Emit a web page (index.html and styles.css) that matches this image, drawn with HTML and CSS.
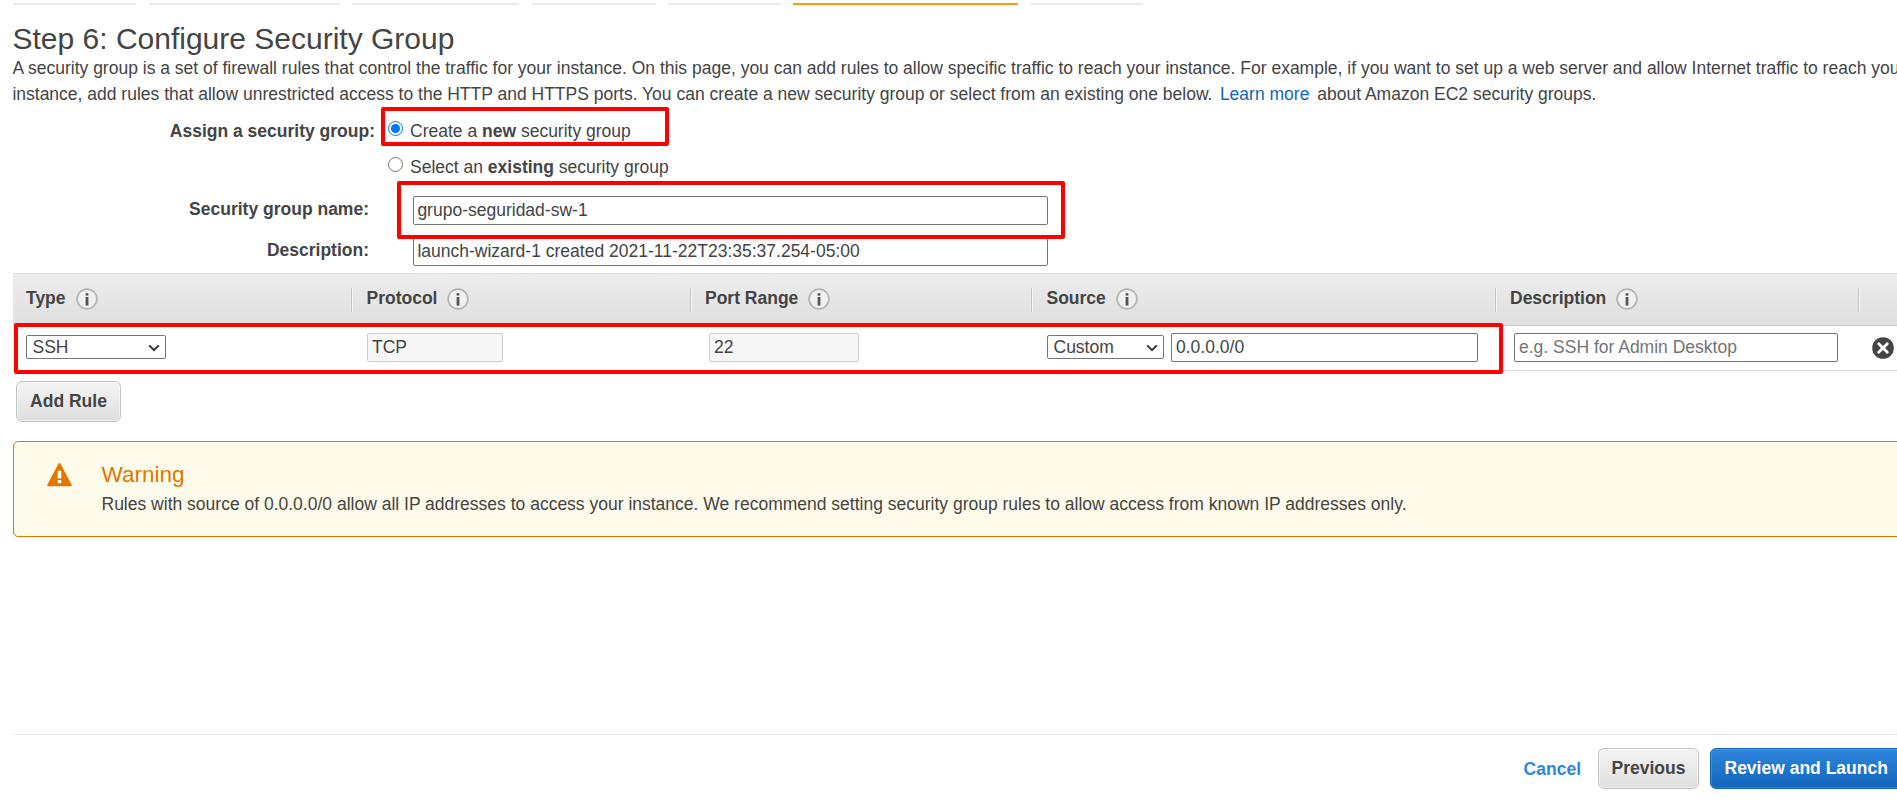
FILE: index.html
```html
<!DOCTYPE html>
<html lang="en">
<head>
<meta charset="utf-8">
<title>Step 6: Configure Security Group</title>
<link rel="stylesheet" href="styles.css">
</head>
<body>
<svg class="defs" width="0" height="0" aria-hidden="true">
  <symbol id="info" viewBox="0 0 22 22">
    <circle cx="11" cy="11" r="9.9" fill="#f1f1f1" stroke="#b4b4b4" stroke-width="1.7"/>
    <rect x="9.6" y="5.2" width="2.8" height="2.4" fill="#555"/>
    <rect x="9.6" y="9" width="2.8" height="8.6" fill="#555"/>
  </symbol>
  <symbol id="chevron" viewBox="0 0 12 8">
    <path d="M1.2 1.4 6 6.1l4.8-4.7" fill="none" stroke="#333" stroke-width="2"/>
  </symbol>
</svg>
<div class="page">
  <nav class="steps">
    <span class="step s1"></span><span class="step s2"></span><span class="step s3"></span><span class="step s4"></span><span class="step s5"></span><span class="step s6 active"></span><span class="step s7"></span>
  </nav>
  <h1 class="title">Step 6: Configure Security Group</h1>
  <p class="intro">A security group is a set of firewall rules that control the traffic for your instance. On this page, you can add rules to allow specific traffic to reach your instance. For example, if you want to set up a web server and allow Internet traffic to reach your<br>instance, add rules that allow unrestricted access to the HTTP and HTTPS ports. You can create a new security group or select from an existing one below. <a class="learn">Learn more</a> about Amazon EC2 security groups.</p>

  <form class="form">
    <div class="choice">
      <span class="label wide">Assign a security group:</span>
      <input class="radio" type="radio" name="sg" checked>
      <span>Create a <b>new</b> security group</span>
    </div>
    <div class="choice">
      <span class="label wide"></span>
      <input class="radio" type="radio" name="sg">
      <span>Select an <b>existing</b> security group</span>
    </div>
    <div class="field first">
      <span class="label">Security group name:</span>
      <input class="input long" type="text" value="grupo-seguridad-sw-1">
    </div>
    <div class="field">
      <span class="label">Description:</span>
      <input class="input long" type="text" value="launch-wizard-1 created 2021-11-22T23:35:37.254-05:00">
    </div>
  </form>

  <div class="grid head">
    <div class="th">Type<svg class="info"><use href="#info"/></svg></div>
    <div class="th">Protocol<svg class="info"><use href="#info"/></svg></div>
    <div class="th">Port Range<svg class="info"><use href="#info"/></svg></div>
    <div class="th">Source<svg class="info"><use href="#info"/></svg></div>
    <div class="th">Description<svg class="info"><use href="#info"/></svg></div>
    <div class="th"></div>
  </div>
  <div class="grid row">
    <div class="td"><span class="select type">SSH<svg class="chevron"><use href="#chevron"/></svg></span></div>
    <div class="td"><input class="input off protocol" type="text" value="TCP" readonly></div>
    <div class="td"><input class="input off port" type="text" value="22" readonly></div>
    <div class="td source"><span class="select custom">Custom<svg class="chevron"><use href="#chevron"/></svg></span><input class="input cidr" type="text" value="0.0.0.0/0"></div>
    <div class="td"><input class="input desc" type="text" placeholder="e.g. SSH for Admin Desktop"></div>
    <div class="td"><svg class="remove" viewBox="0 0 22 22"><circle cx="11" cy="11" r="10.8" fill="#444"/><path d="M6.7 6.7l8.6 8.6M15.3 6.7l-8.6 8.6" stroke="#fff" stroke-width="2.8" stroke-linecap="round"/></svg></div>
  </div>
  <button class="btn add">Add Rule</button>

  <section class="warning">
    <svg class="alert" viewBox="0 0 25 24"><path d="M12.5 1 L23.8 22.2 H1.2 Z" fill="#e07700" stroke="#e07700" stroke-width="2" stroke-linejoin="round"/><path d="M10.7 7.8h3.6v7.6h-3.6zM10.7 17h3.6v3.2h-3.6z" fill="#fffbea"/></svg>
    <div>
      <h2 class="warning-title">Warning</h2>
      <p class="warning-text">Rules with source of 0.0.0.0/0 allow all IP addresses to access your instance. We recommend setting security group rules to allow access from known IP addresses only.</p>
    </div>
  </section>

  <footer class="footer">
    <a class="cancel">Cancel</a>
    <button class="btn">Previous</button>
    <button class="btn primary">Review and Launch</button>
  </footer>

  <div class="mark mark-new"></div>
  <div class="mark mark-name"></div>
  <div class="mark mark-rule"></div>
</div>
</body>
</html>
```
FILE: styles.css
```css
* { box-sizing: border-box; }
body {
  margin: 0;
  background: #fff;
  color: #444;
  font: 17.5px/26px "Liberation Sans", Arial, sans-serif;
  overflow: hidden;
}
.defs { position: absolute; }
.page {
  position: relative;
  display: flex;
  flex-direction: column;
  align-items: stretch;
  height: 806px;
  padding-left: 13px;
  overflow: hidden;
}

.steps { display: flex; gap: 12.5px; padding-top: 3px; height: 22px; flex: none; }
.step { height: 2px; background: #ebebeb; }
.step.active { background: #ff9914; }
.s1 { width: 123px; }
.s2 { width: 191px; }
.s3 { width: 167px; }
.s4 { width: 124px; }
.s5 { width: 112.5px; }
.s6 { width: 225px; }
.s7 { width: 112px; }

.title { margin: 0 0 -1px -0.5px; font-size: 30px; line-height: 34px; font-weight: 400; }
.intro { margin: 0 0 0 -0.6px; white-space: nowrap; }
.learn { color: #1166bb; margin: 0 3px 0 2.6px; }

.form { height: 166px; padding-top: 6px; flex: none; }
.choice { display: flex; align-items: center; height: 36px; }
.label { width: 356px; text-align: right; font-weight: 700; }
.label.wide { width: 362px; }
.radio { width: 15px; height: 15px; margin: 0 7px 5px 13px; }
.field { display: flex; align-items: center; height: 41px; }
.field.first { margin-top: 5px; }
.field .label { padding-bottom: 3px; }
.input {
  height: 29px;
  padding: 0 4px;
  border: 1px solid #767676;
  border-radius: 2px;
  background: #fff;
  color: #444;
  font: inherit;
  outline: none;
}
.input::placeholder { color: #757575; opacity: 1; }
.input.off { background: #f7f7f7; border-color: #ccc; }
.long { width: 635px; margin-left: 44px; padding-left: 3.4px; }

.grid { display: grid; grid-template-columns: 340px 338.5px 341.5px 463.5px 363.5px 1fr; flex: none; }
.head {
  height: 53px;
  padding-top: 14px;
  border-top: 1px solid #ddd;
  border-bottom: 1px solid #c8c8c8;
  background: linear-gradient(#ededed, #dfdfdf);
}
.th {
  display: flex;
  height: 24px;
  padding-left: 13px;
  line-height: 20px;
  font-weight: 700;
  border-right: 1px solid #f8f8f8;
  box-shadow: inset -1px 0 #c4c4c4;
}
.th:last-child { border: 0; box-shadow: none; }
.th + .th { padding-left: 13.5px; }
.info { width: 22px; height: 22px; margin-left: 10px; }
.row { height: 45px; border-bottom: 1px solid #ddd; padding-top: 7px; }
.td { display: flex; align-items: center; height: 29px; padding-left: 14px; }
.td:first-child { padding-left: 13px; }
.td:nth-child(3) { padding-left: 17.5px; }
.td:nth-child(5) { padding-left: 17.5px; }
.td:nth-child(6) { padding-left: 12px; }
.select {
  display: flex;
  align-items: center;
  justify-content: space-between;
  height: 24px;
  margin-bottom: 1px;
  padding: 0 5px 0 5.5px;
  border: 1px solid #767676;
  border-radius: 2px;
  line-height: 22px;
}
.chevron { width: 12px; height: 8px; margin-top: 2px; }
.type { width: 140px; }
.custom { width: 117px; }
.source { gap: 7px; }
.protocol { width: 136px; }
.port { width: 150px; }
.cidr { width: 307px; }
.desc { width: 324px; }
.remove { width: 22px; height: 22px; }

.btn {
  height: 41px;
  padding: 0 13px 2px;
  border: 1px solid #c4c4c4;
  border-radius: 6px;
  background: linear-gradient(#f4f4f4, #dfdfdf);
  box-shadow: inset 0 0 0 1px rgba(255, 255, 255, .45);
  color: #444;
  font: 700 17.5px/36px "Liberation Sans", Arial, sans-serif;
  white-space: nowrap;
  flex: none;
}
.btn.add { align-self: flex-start; width: 105px; margin: 10px 0 0 3px; }
.btn.primary {
  width: 200px;
  padding: 0 0 2px 13.5px;
  text-align: left;
  border-color: #1166bb;
  background: linear-gradient(#2f86de, #1166bb);
  box-shadow: inset 0 0 0 1px rgba(255, 255, 255, .15);
  color: #fff;
}

.warning {
  display: flex;
  width: 1900px;
  height: 96px;
  margin-top: 19px;
  padding: 20px 0 0 33px;
  border: 1px solid #e07700;
  border-radius: 5px;
  background: #fffbea;
  flex: none;
}
.alert { width: 25px; height: 24px; margin: 1px 29.5px 0 0; }
.warning-title { margin: 0; font-size: 22.5px; line-height: 26px; font-weight: 400; color: #e07700; }
.warning-text { margin: 3px 0 0; white-space: nowrap; }

.footer {
  display: flex;
  align-items: center;
  justify-content: flex-end;
  width: 1897px;
  height: 72px;
  margin-top: auto;
  padding-bottom: 4px;
  border-top: 1px solid #e5e5e5;
  flex: none;
}
.footer .btn { width: 101px; padding-left: 12px; padding-right: 12px; margin-right: 11px; }
.footer .btn.primary { width: 200px; padding-left: 13.5px; margin-right: 0; }
.cancel { margin-right: 17px; padding-top: 1px; font-weight: 700; color: #2e86de; }

/* Red callouts drawn over the form */
.mark { position: absolute; border: 4px solid #f00; border-radius: 2px; }
.mark-new { left: 381px; top: 107px; width: 288px; height: 39px; }
.mark-name { left: 397px; top: 181px; width: 668px; height: 58px; }
.mark-rule { left: 14px; top: 323px; width: 1489px; height: 51px; }
```
